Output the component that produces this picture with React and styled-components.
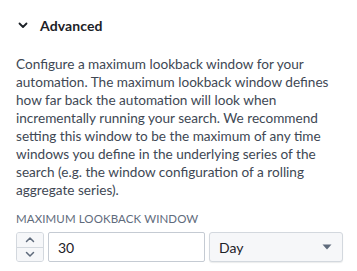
import React from "react";
import styled, { createGlobalStyle } from "styled-components";

const Global = createGlobalStyle`
  html, body { margin: 0; padding: 0; background: #ffffff; }
  body { font-family: Lato, "Open Sans", sans-serif; -webkit-font-smoothing: antialiased; }
`;

const Panel = styled.div`
  width: 357px;
  height: 271px;
  box-sizing: border-box;
  padding: 14px 14px 0 16px;
  display: flex;
  flex-direction: column;
`;

const Header = styled.div`
  display: flex;
  align-items: center;
  gap: 12px;
  height: 22px;
  padding-left: 2px;
  color: #1c2127;
`;

const Title = styled.span`
  font-size: 14px;
  font-weight: 700;
  letter-spacing: 0.1px;
`;

const Description = styled.p`
  margin: 19px 0 0 0;
  font-size: 13.6px;
  line-height: 18px;
  color: #404854;
  width: 330px;
`;

const Label = styled.div`
  margin-top: 13px;
  height: 14px;
  line-height: 14px;
  font-size: 11.5px;
  color: #5f6b7c;
  text-transform: uppercase;
  letter-spacing: 0.1px;
`;

const Row = styled.div`
  margin-top: 6px;
  display: flex;
  gap: 4px;
  height: 30px;
`;

const Stepper = styled.div`
  width: 28px;
  display: flex;
  flex-direction: column;
  border: 1px solid #d3d8de;
  border-radius: 3px;
  box-sizing: border-box;
  overflow: hidden;
  background: #f6f7f9;
`;

const StepButton = styled.button`
  flex: 1;
  border: none;
  padding: 0;
  margin: 0;
  background: #f6f7f9;
  display: flex;
  align-items: center;
  justify-content: center;
  color: #5f6b7c;
  ${(p) => (p.$top ? "border-bottom: 1px solid #d3d8de;" : "")}
`;

const NumberInput = styled.div`
  width: 157px;
  box-sizing: border-box;
  border: 1px solid #c5cbd3;
  border-radius: 2px;
  display: flex;
  align-items: center;
  padding-left: 9px;
  font-size: 14px;
  color: #1c2127;
  background: #fff;
`;

const Select = styled.div`
  flex: 1;
  box-sizing: border-box;
  border: 1px solid #d3d8de;
  border-radius: 3px;
  background: #f6f7f9;
  box-shadow: 0 1px 1px rgba(17, 20, 24, 0.08);
  display: flex;
  align-items: center;
  justify-content: space-between;
  padding: 0 10px 0 9px;
  font-size: 14px;
  color: #1c2127;
`;

const Chevron = ({ dir = "down", size = 10, sw = 1.8 }) => (
  <svg width={size} height={size} viewBox="0 0 10 10" fill="none">
    <path
      d={dir === "down" ? "M1.5 3.5 L5 7 L8.5 3.5" : "M1.5 6.5 L5 3 L8.5 6.5"}
      stroke="currentColor"
      strokeWidth={sw}
      strokeLinecap="round"
      strokeLinejoin="round"
    />
  </svg>
);

const Caret = () => (
  <svg width="10" height="6" viewBox="0 0 10 6">
    <path d="M0.5 0.5 H9.5 L5 5.5 Z" fill="#5f6b7c" />
  </svg>
);

export default function App() {
  return (
    <>
      <Global />
      <Panel>
        <Header>
          <Chevron dir="down" size={10} sw={1.8} />
          <Title>Advanced</Title>
        </Header>
        <Description>
          Configure a maximum lookback window for your automation. The maximum
          lookback window defines how far back the automation will look when
          incrementally running your search. We recommend setting this window
          to be the maximum of any time windows you define in the underlying
          series of the search (e.g. the window configuration of a rolling
          aggregate series).
        </Description>
        <Label>Maximum lookback window</Label>
        <Row>
          <Stepper>
            <StepButton $top>
              <Chevron dir="up" size={10} sw={1.5} />
            </StepButton>
            <StepButton>
              <Chevron dir="down" size={10} sw={1.5} />
            </StepButton>
          </Stepper>
          <NumberInput>30</NumberInput>
          <Select>
            <span>Day</span>
            <Caret />
          </Select>
        </Row>
      </Panel>
    </>
  );
}
